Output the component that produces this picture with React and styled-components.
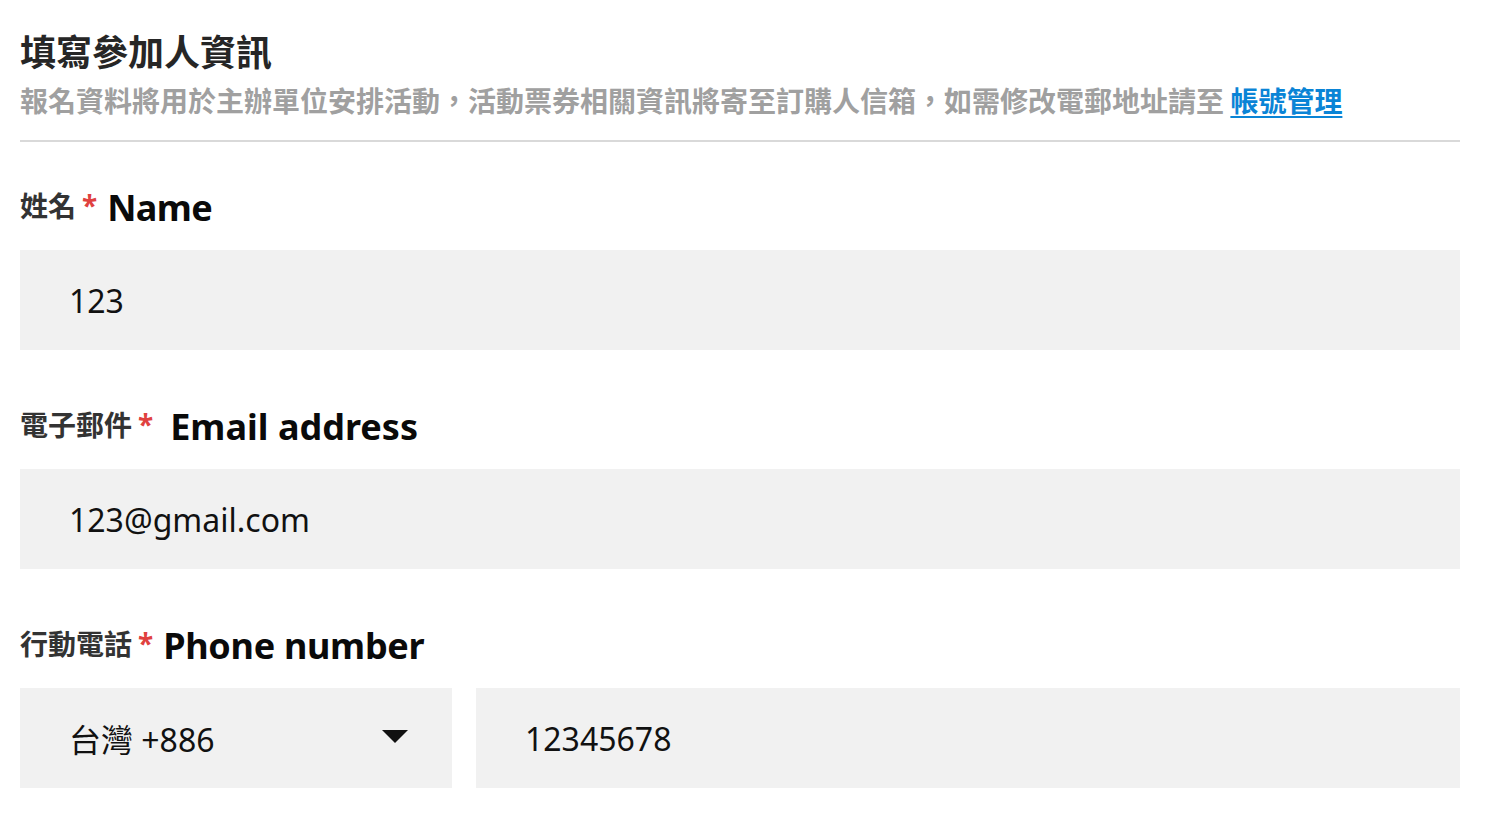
import React from "react";
import styled, { createGlobalStyle } from "styled-components";

const Global = createGlobalStyle`
  html, body { margin: 0; padding: 0; background: #fff; }
  body { font-family: "Noto Sans", "Noto Sans CJK TC", sans-serif; }
  * { box-sizing: border-box; }
`;

const Page = styled.div`
  padding: 24px 42px 40px 20px;
  width: 1502px;
`;

const Header = styled.header`
  padding-bottom: 16px;
  border-bottom: 2px solid #d9d9d9;
`;

const Title = styled.h1`
  margin: 0;
  font-size: 36px;
  line-height: 52px;
  font-weight: 700;
  color: #262626;
  font-family: "Noto Sans CJK TC", sans-serif;
`;

const Subtitle = styled.p`
  margin: 0;
  font-size: 28px;
  line-height: 48px;
  font-weight: 700;
  color: #a0a0a0;
  font-family: "Noto Sans CJK TC", sans-serif;
`;

const Link = styled.a`
  color: #0a84d6;
  text-decoration: underline;
  text-underline-offset: 4px;
  text-decoration-thickness: 2px;
`;

const Field = styled.div`
  display: flex;
  flex-direction: column;
  gap: 14px;
`;

const Form = styled.div`
  display: flex;
  flex-direction: column;
  gap: 49px;
  padding-top: 38px;
`;

const Label = styled.div`
  display: flex;
  align-items: center;
  height: 56px;
  gap: ${(p) => p.$gap || 12}px;
`;

const LabelZh = styled.span`
  display: flex;
  align-items: center;
  gap: 6px;
  padding-bottom: 6px;
  font-family: "Noto Sans CJK TC", sans-serif;
  font-size: 28px;
  line-height: 1;
  font-weight: 700;
  color: #333;
`;

const Star = styled.span`
  font-family: "Noto Sans", sans-serif;
  font-weight: 700;
  color: #e0413f;
`;

const LabelEn = styled.span`
  font-family: "Noto Sans", sans-serif;
  font-size: 36px;
  line-height: 1;
  font-weight: 700;
  letter-spacing: ${(p) => p.$ls || 0}px;
  color: #0a0a0a;
`;

const Box = styled.div`
  height: 100px;
  background: #f1f1f1;
  display: flex;
  align-items: center;
  justify-content: space-between;
  padding: 0 44px 0 49px;
  font-family: "Noto Sans", "Noto Sans CJK TC", sans-serif;
  font-size: 32px;
  color: #111;
  flex: ${(p) => p.$flex || "none"};
  width: ${(p) => (p.$w ? `${p.$w}px` : "auto")};
`;

const Row = styled.div`
  display: flex;
  gap: 24px;
`;

const ArrowIcon = styled.svg`
  margin-bottom: 4px;
`;

const Arrow = () => (
  <ArrowIcon width="26" height="13" viewBox="0 0 26 13">
    <polygon points="0,0 26,0 13,13" fill="#111" />
  </ArrowIcon>
);

export default function App() {
  return (
    <>
      <Global />
      <Page>
        <Header>
          <Title>填寫參加人資訊</Title>
          <Subtitle>
            報名資料將用於主辦單位安排活動，活動票券相關資訊將寄至訂購人信箱，如需修改電郵地址請至{" "}
            <Link href="#">帳號管理</Link>
          </Subtitle>
        </Header>
        <Form>
          <Field>
            <Label $gap={10}>
              <LabelZh>
                姓名<Star>*</Star>
              </LabelZh>
              <LabelEn $ls={-0.6}>Name</LabelEn>
            </Label>
            <Box>123</Box>
          </Field>
          <Field>
            <Label $gap={17}>
              <LabelZh>
                電子郵件<Star>*</Star>
              </LabelZh>
              <LabelEn>Email address</LabelEn>
            </Label>
            <Box>123@gmail.com</Box>
          </Field>
          <Field>
            <Label $gap={10}>
              <LabelZh>
                行動電話<Star>*</Star>
              </LabelZh>
              <LabelEn $ls={-0.3}>Phone number</LabelEn>
            </Label>
            <Row>
              <Box $w={432}>
                <span>台灣 +886</span>
                <Arrow />
              </Box>
              <Box $flex="1">12345678</Box>
            </Row>
          </Field>
        </Form>
      </Page>
    </>
  );
}
